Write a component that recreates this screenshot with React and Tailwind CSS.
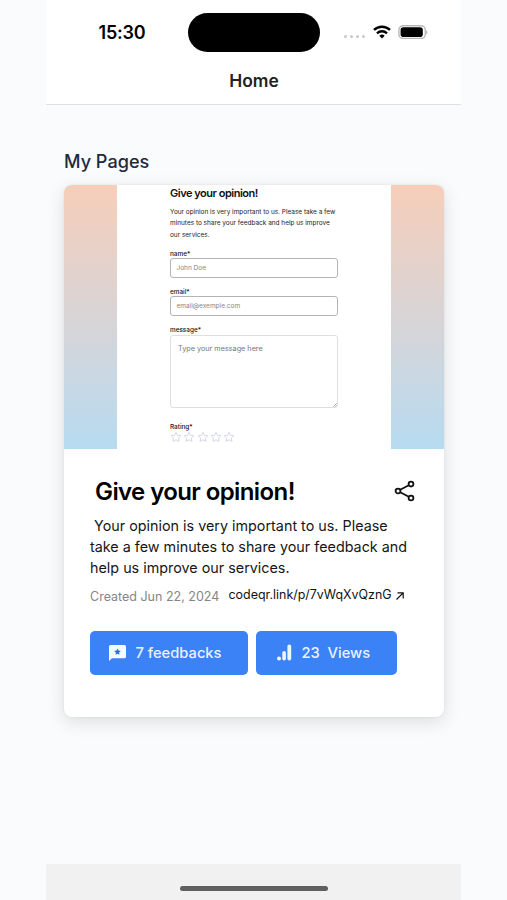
import React from "react";

function StatusBar() {
  return (
    <div className="flex h-[64px] items-center pl-[52px]">
      <span className="w-[90px] pt-[1px] pl-[0.5px] text-[18px] leading-none font-semibold tracking-[-0.2px] whitespace-nowrap text-black">15:30</span>
      <div className="h-[39px] w-[132px] rounded-full bg-black" />
      <div className="mt-[9px] ml-[24px] flex gap-[2.6px]">
        {[0, 1, 2, 3].map((i) => (
          <span key={i} className="h-[3.6px] w-[3.4px] rounded-full bg-[#c9c9c9]" />
        ))}
      </div>
      <svg className="ml-[7.5px] h-[14px] w-[18px] shrink-0" viewBox="0 0 18 14" fill="none" stroke="#000" strokeWidth="2.4">
        <path d="M1 4.9a11.6 11.6 0 0 1 16 0" />
        <path d="M4 8.3a7.3 7.3 0 0 1 10 0" />
        <path d="M9 13.6 6.3 10.8a4 4 0 0 1 5.4 0Z" fill="#000" stroke="none" />
      </svg>
      <svg className="ml-[7.5px] h-[14px] w-[30px] shrink-0" viewBox="0 0 30 14">
        <rect x="0.9" y="0.7" width="26.4" height="12.8" rx="4.2" fill="#fff" stroke="#b9b9b9" strokeWidth="1.4" />
        <rect x="2.6" y="2.2" width="22.2" height="9.8" rx="2.8" fill="#000" />
        <path d="M28.4 5.2v4c1.2-.5 1.2-3.5 0-4Z" fill="#999" />
      </svg>
    </div>
  );
}

function Field({ label, placeholder }) {
  return (
    <div className="h-[38px]">
      <div className="flex h-[10px] items-center pt-[1px] text-[6.4px] leading-none font-medium text-[#111]">{label}</div>
      <div className="flex h-[20px] items-center rounded-[3px] border border-[#b4b4b4] pt-[1px] pl-[5.5px] text-[6.5px] leading-none text-[#858585]">
        {placeholder}
      </div>
    </div>
  );
}

function Preview() {
  return (
    <div className="flex h-[264px] pl-[53px] bg-gradient-to-b from-[#f6ceb9] via-[#d8d4d6] to-[#b6dbf1]">
      <div className="h-full w-[274px] bg-white pl-[53px]">
        <div className="flex h-[17px] items-center text-[11px] leading-none font-semibold tracking-[-0.48px] whitespace-nowrap text-[#111]">
          Give your opinion!
        </div>
        <div className="mt-[5px] text-[6.46px] leading-[11.4px] whitespace-nowrap text-[#222]">
          Your opinion is very important to us. Please take a few
          <br />
          minutes to share your feedback and help us improve
          <br />
          our services.
        </div>
        <div className="mt-[7px] w-[168px]">
          <Field label="name*" placeholder="John Doe" />
          <Field label="email*" placeholder="email@exemple.com" />
          <div className="flex h-[11px] items-center text-[6.4px] leading-none font-medium text-[#111]">message*</div>
          <div className="relative h-[73px] rounded-[3px] border border-[#dfdfdf] pt-[9px] pl-[7px] text-[7.25px] leading-[8px] text-[#777]">
            Type your message here
            <svg className="absolute right-0 bottom-0 h-[4px] w-[4px]" viewBox="0 0 4 4" fill="none" stroke="#777" strokeWidth="0.6">
              <path d="M0.3 3.7 3.7 0.3M2.3 3.7 3.7 2.3" />
            </svg>
          </div>
          <div className="mt-[13px] flex h-[10px] items-center pt-[1px] text-[6.4px] leading-none font-medium text-[#111]">Rating*</div>
          <div className="flex gap-[1.3px]">
            {[0, 1, 2, 3, 4].map((i) => (
              <svg key={i} className="h-[12px] w-[12px]" viewBox="0 0 24 24" fill="none" stroke="#cfd2e2" strokeWidth="1.7" strokeLinejoin="round">
                <path d="m12 2.5 2.9 6.2 6.7.8-5 4.6 1.4 6.8-6-3.4-6 3.4 1.4-6.8-5-4.6 6.7-.8Z" />
              </svg>
            ))}
          </div>
        </div>
      </div>
    </div>
  );
}

function Details() {
  return (
    <div className="px-[26px] pt-[28px]">
      <div className="flex h-[30px] items-center justify-between">
        <h2 className="pl-[5px] text-[24px] leading-none font-semibold tracking-[-0.6px] whitespace-nowrap text-black">Give your opinion!</h2>
        <svg className="mr-[1.5px] mb-[2px] h-[22px] w-[22px]" viewBox="0 0 22 22" fill="none" stroke="#111" strokeWidth="1.8">
          <circle cx="4" cy="11" r="2.4" />
          <circle cx="17" cy="4.1" r="2.4" />
          <circle cx="17" cy="18" r="2.4" />
          <path d="m6.2 9.8 8.6-4.5M6.2 12.2l8.6 4.6" />
        </svg>
      </div>
      <p className="mt-[7.5px] text-[14.35px] leading-[21px] whitespace-pre text-[#161616]">
        {" Your opinion is very important to us. Please\ntake a few minutes to share your feedback and\nhelp us improve our services."}
      </p>
      <div className="mt-[7px] flex h-[24px] items-center whitespace-nowrap">
        <span className="w-[138.5px] pt-[2px] text-[12.5px] leading-none text-[#858589]">Created Jun 22, 2024</span>
        <span className="pb-[2px] text-[12.45px] leading-none text-[#111]">codeqr.link/p/7vWqXvQznG</span>
        <svg className="mb-[2px] ml-[4.5px] h-[8px] w-[8px]" viewBox="0 0 8 8" fill="none" stroke="#111" strokeWidth="1.2">
          <path d="M0.5 7.5 7.2 0.8M1.5 0.8h5.7v5.7" />
        </svg>
      </div>
      <div className="mt-[22px] flex gap-[8px] text-[14.7px] leading-none font-medium whitespace-pre text-[#eaf3ff]">
        <button className="flex h-[44.5px] w-[158px] items-center rounded-[5px] bg-[#3b82f6] pl-[19px]">
          <svg className="mr-[9.5px] h-[16px] w-[17px]" viewBox="0 0 17 16">
            <path d="M1.5 0h14A1.5 1.5 0 0 1 17 1.5v10.2a1.5 1.5 0 0 1-1.5 1.5H3L0 16V1.5A1.5 1.5 0 0 1 1.5 0Z" fill="#f5faff" />
            <path d="m8.5 3.5 1 2.1 2.3.3-1.7 1.6.4 2.3-2-1.1-2 1.1.4-2.3-1.7-1.6 2.3-.3Z" fill="#2f6fe0" />
          </svg>
          <span className="pt-[2px]">7 feedbacks</span>
        </button>
        <button className="flex h-[44.5px] w-[141px] items-center rounded-[5px] bg-[#3b82f6] pl-[21px]">
          <svg className="mr-[9.5px] h-[17px] w-[15px]" viewBox="0 0 15 17" fill="#eef6ff">
            <circle cx="2" cy="14.5" r="2" />
            <rect x="5.3" y="7" width="3.6" height="9.5" rx="1.8" />
            <rect x="10.4" y="0.5" width="3.8" height="16" rx="1.9" />
          </svg>
          <span className="pt-[2px]">{"23  Views"}</span>
        </button>
      </div>
    </div>
  );
}

export default function App() {
  return (
    <div className="flex h-[900px] w-[507px] overflow-hidden bg-[#f9fbfd] pl-[46px] font-['Inter','Liberation_Sans',sans-serif]">
      <div className="flex w-[415px] flex-col">
        <header className="h-[105px] border-b border-[#dfe2e3] bg-white">
          <StatusBar />
          <h1 className="mt-[8px] pl-[1px] text-center text-[17.4px] leading-[18px] font-semibold text-[#222]">Home</h1>
        </header>
        <main className="flex-1 px-[18px] pt-[46px]">
          <h2 className="h-[34px] text-[18.1px] leading-[20px] font-medium text-[#1e293b]">My Pages</h2>
          <section className="h-[532px] w-[379.5px] overflow-hidden rounded-[8px] bg-white shadow-[0_5px_18px_rgba(0,0,0,0.12),0_0_2px_rgba(0,0,0,0.1)]">
            <Preview />
            <Details />
          </section>
        </main>
        <footer className="flex h-[36px] justify-center rounded-t-[2px] bg-[#f1f1f1] pt-[22px]">
          <div className="h-[5px] w-[148px] rounded-full bg-[#606060]" />
        </footer>
      </div>
    </div>
  );
}
